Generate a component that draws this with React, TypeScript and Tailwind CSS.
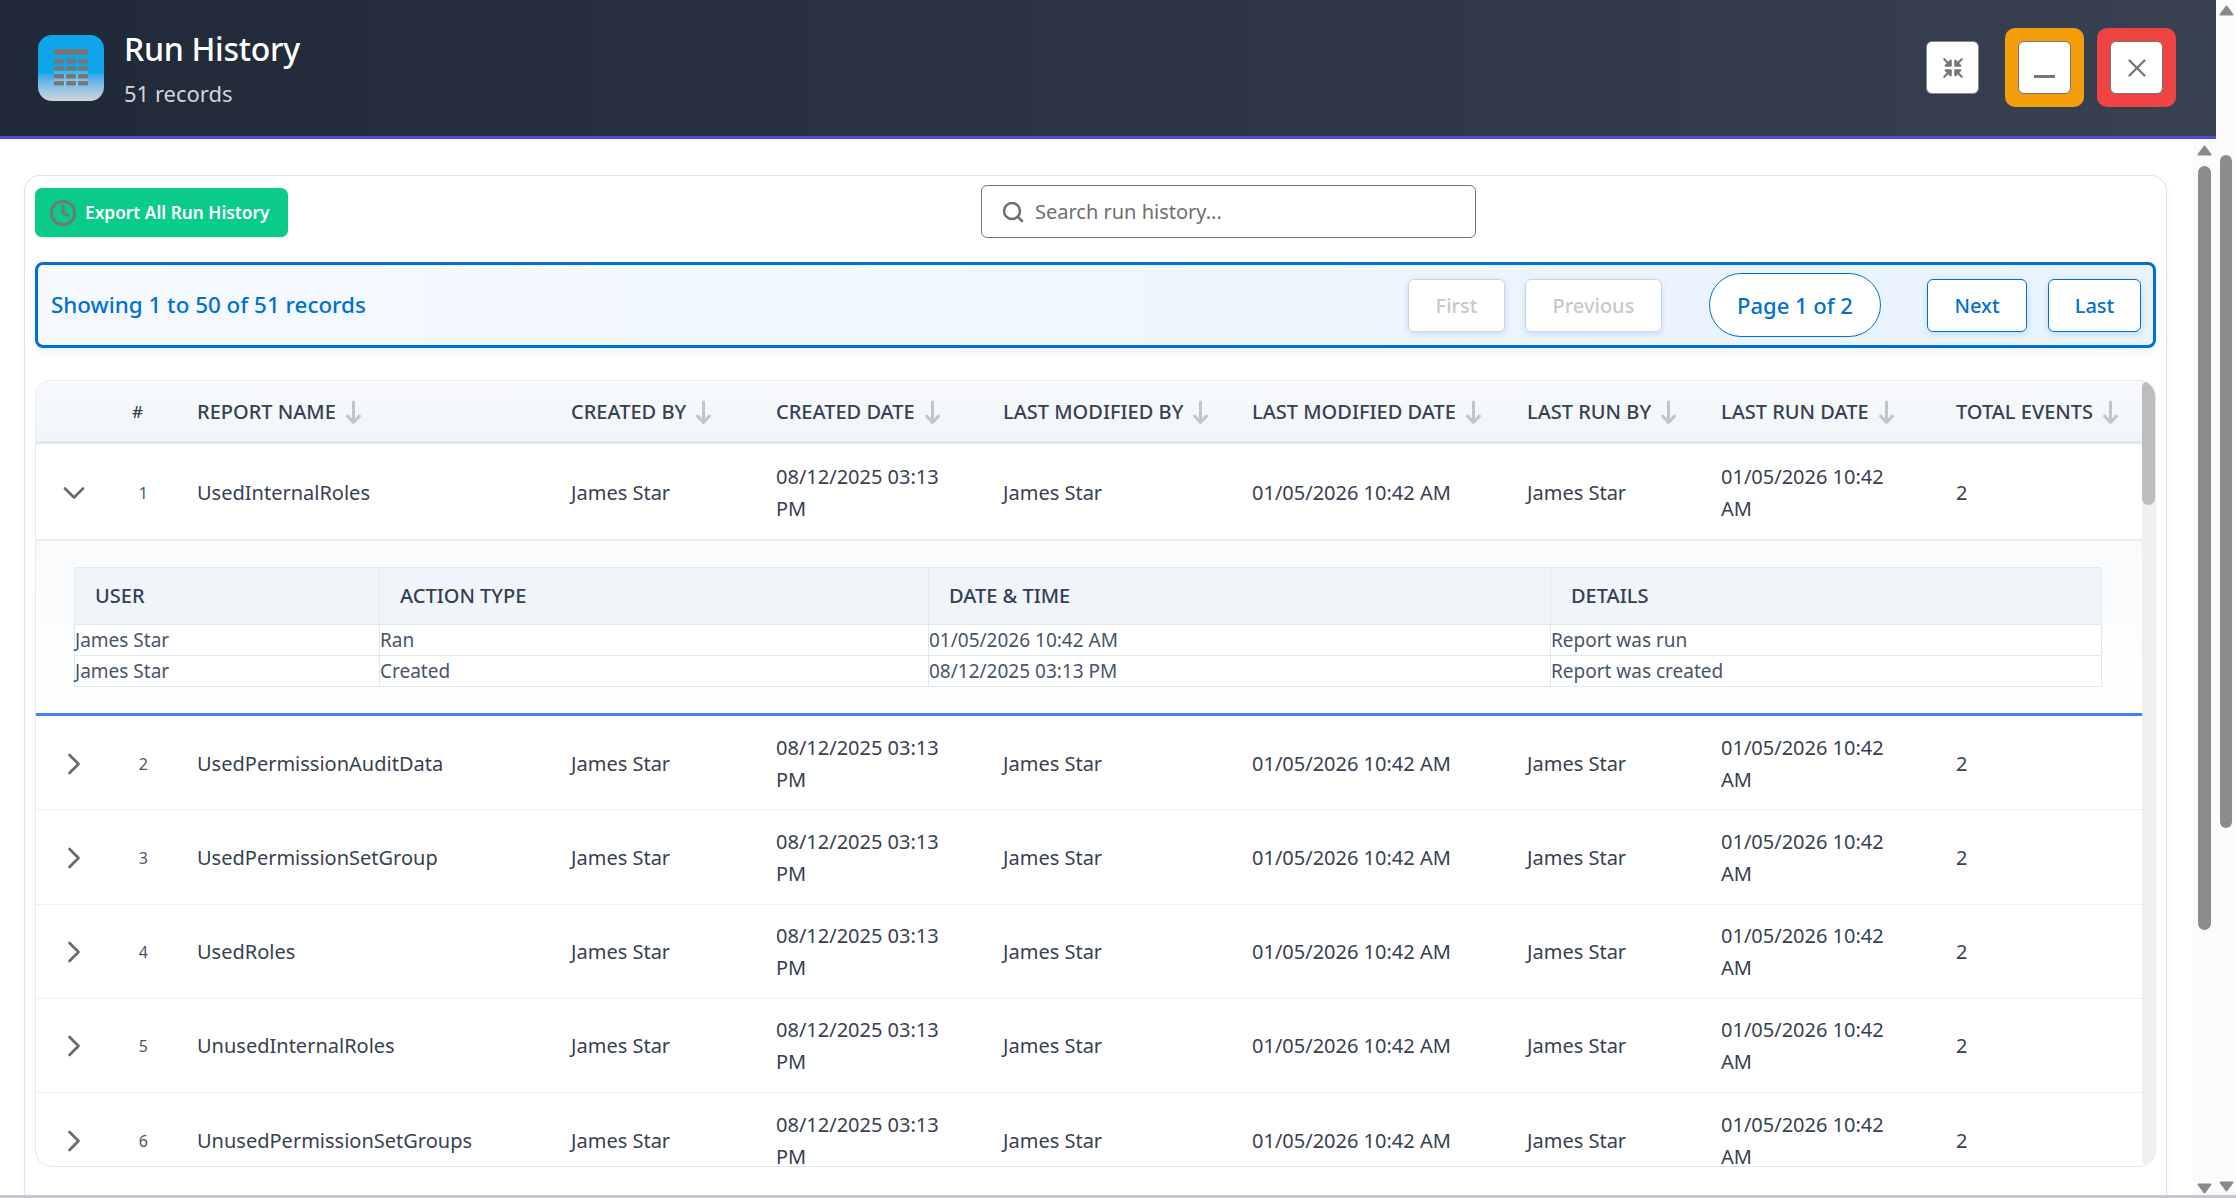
import { ChevronDown, ChevronRight, Clock, Search, X } from "lucide-react";

const columns = [
  { label: "CREATED BY", w: "w-[205px]" },
  { label: "CREATED DATE", w: "w-[227px]" },
  { label: "LAST MODIFIED BY", w: "w-[249px]" },
  { label: "LAST MODIFIED DATE", w: "w-[275px]" },
  { label: "LAST RUN BY", w: "w-[194px]" },
  { label: "LAST RUN DATE", w: "w-[235px]" },
  { label: "TOTAL EVENTS", w: "flex-1" },
];

const reports = [
  "UsedInternalRoles",
  "UsedPermissionAuditData",
  "UsedPermissionSetGroup",
  "UsedRoles",
  "UnusedInternalRoles",
  "UnusedPermissionSetGroups",
];

function SortArrow() {
  return (
    <svg width="17" height="25" viewBox="0 0 17 25" className="ml-[9px] shrink-0" fill="none" stroke="#c4c4c4" strokeWidth="3" strokeLinecap="round" strokeLinejoin="round">
      <path d="M8.5 2v20M2.5 16l6 6.5 6-6.5" />
    </svg>
  );
}

function CompressIcon() {
  return (
    <svg width="22" height="22" viewBox="0 0 24 24" fill="#767676" stroke="#767676" strokeWidth="2.4" strokeLinecap="round" strokeLinejoin="round">
      <path d="M2.5 2.5L7 7M4 9.5h5.5V4zM21.5 2.5L17 7M20 9.5h-5.5V4zM2.5 21.5L7 17M4 14.5h5.5V20zM21.5 21.5L17 17M20 14.5h-5.5V20z" />
    </svg>
  );
}

function Row({ n, name, open }: { n: number; name: string; open?: boolean }) {
  return (
    <div className={`flex items-center pt-[2px] text-[20px] text-[#374151] ${open ? "h-[97px] border-b-2 border-[#e8edf3]" : "h-[94.25px] border-b border-[#eef0f3]"}`}>
      <div className="flex w-[53px] justify-end text-[#6b6b6b]">
        {open ? <ChevronDown size={36} strokeWidth={1.8} className="-mr-[3px]" /> : <ChevronRight size={36} strokeWidth={1.8} className="-mr-[3px]" />}
      </div>
      <div className="w-[59px] text-right text-[16px] text-[#4b5563]">{n}</div>
      <div className="w-[423px] pl-[49px]">{name}</div>
      <div className="w-[205px]">James Star</div>
      <div className="w-[227px] pr-[47px] leading-[32px]">08/12/2025 03:13 PM</div>
      <div className="w-[249px]">James Star</div>
      <div className="w-[275px] whitespace-nowrap">01/05/2026 10:42 AM</div>
      <div className="w-[194px]">James Star</div>
      <div className="w-[235px] pr-[51px] leading-[32px]">01/05/2026 10:42 AM</div>
      <div className="flex-1">2</div>
    </div>
  );
}

function Detail() {
  const head = ["USER", "ACTION TYPE", "DATE & TIME", "DETAILS"];
  const rows = [
    ["James Star", "Ran", "01/05/2026 10:42 AM", "Report was run"],
    ["James Star", "Created", "08/12/2025 03:13 PM", "Report was created"],
  ];
  const widths = ["w-[304px]", "w-[549px]", "w-[622px]", "flex-1"];
  return (
    <div className="border-b-[3px] border-[#3b82f6] bg-gradient-to-b from-[#f8fafc] to-white pb-[26px] pl-[38px] pr-[40px] pt-[26px]">
      <div className="border border-[#e2e8f0]">
        <div className="flex h-[56px] items-center bg-[#f1f5f9] text-[20px] font-medium text-[#334155]">
          {head.map((h, i) => (
            <div key={h} className={`${widths[i]} flex h-full items-center border-l border-[#e2e8f0] pl-[20px] first:border-l-0`}>{h}</div>
          ))}
        </div>
        {rows.map((r) => (
          <div key={r[2]} className="flex h-[31px] items-center border-t border-[#e2e8f0] bg-white text-[19px] text-[#475569]">
            {r.map((c, i) => (
              <div key={c} className={`${widths[i]} flex h-full items-center border-l border-[#e2e8f0] first:border-l-0`}>{c}</div>
            ))}
          </div>
        ))}
      </div>
    </div>
  );
}

function Triangle({ down }: { down?: boolean }) {
  return (
    <svg width="15" height="11" viewBox="0 0 15 11" className="shrink-0">
      <path d={down ? "M1.5 1.5h12L7.5 9.5z" : "M7.5 1.5l6 8h-12z"} fill="#8a8a8a" stroke="#8a8a8a" strokeWidth="2" strokeLinejoin="round" />
    </svg>
  );
}

function PageButton({ label, w, disabled }: { label: string; w: string; disabled?: boolean }) {
  return (
    <button
      className={`flex h-[53px] items-center justify-center rounded-[6px] border bg-white pt-[1px] text-[20px] font-medium shadow-[0_2px_6px_rgba(0,112,210,0.18)] ${w} ${disabled ? "border-[#d1d5db] text-[#c8c8c8]" : "border-[#0070d2] text-[#0070d2]"}`}
    >
      {label}
    </button>
  );
}

export default function App() {
  return (
    <div className="flex h-[1198px] w-[2236px] overflow-hidden bg-white font-['Noto_Sans','Open_Sans',sans-serif]">
      <div className="flex h-full w-[2216px] flex-col border-b-[3px] border-[#c3c7d4]">
        <header className="flex h-[139px] shrink-0 items-center justify-between border-b-[3px] border-[#4f46e5] bg-gradient-to-r from-[#1f2937] to-[#374151] pb-[1px] pl-[38px] pr-[40px]">
          <div className="flex items-center gap-[20px]">
            <div className="flex h-[66px] w-[66px] items-center justify-center rounded-[14px] bg-gradient-to-b from-[#0ea5e9] from-57% to-[#d1d5db]">
              <svg width="34" height="37" viewBox="0 0 34 37">
                <rect x="-3" y="22" width="40" height="15" rx="3" fill="#fff" opacity="0.2" />
                <rect x="0" y="0" width="34" height="6" rx="1" fill="#767676" />
                {[10, 17, 25, 32].map((y) =>
                  [0, 12, 24].map((x) => <rect key={`${x}-${y}`} x={x} y={y} width="10" height="4.5" rx="1" fill="#767676" />),
                )}
              </svg>
            </div>
            <div>
              <div className="text-[32px] font-medium leading-[40px] tracking-[-0.3px] text-white">Run History</div>
              <div className="mt-[10px] text-[22px] leading-[28px] text-[#d1d5db]">51 records</div>
            </div>
          </div>
          <div className="flex items-center gap-[13px]">
            <button className="mr-[13px] flex h-[53px] w-[53px] items-center justify-center rounded-[6px] border border-[#8a8a8a] bg-white">
              <CompressIcon />
            </button>
            <div className="rounded-[10px] bg-[#f59e0b] p-[13px]">
              <button className="flex h-[53px] w-[53px] items-end justify-center rounded-[6px] border border-[#767676] bg-white pb-[15px]">
                <span className="h-[3px] w-[21px] bg-[#767676]" />
              </button>
            </div>
            <div className="rounded-[10px] bg-[#ef4444] p-[13px]">
              <button className="flex h-[53px] w-[53px] items-center justify-center rounded-[6px] border border-[#767676] bg-white text-[#767676]">
                <X size={30} strokeWidth={1.8} />
              </button>
            </div>
          </div>
        </header>

        <div className="flex min-h-0 flex-1">
          <div className="min-h-0 flex-1 overflow-hidden pl-[24px] pr-[26px] pt-[36px]">
            <div className="h-[1100px] rounded-t-[16px] border border-b-0 border-[#dfe1ec] px-[10px] pt-[12px] shadow-[0_2px_8px_rgba(0,0,0,0.04)]">
              <div className="relative flex h-[49px] items-center">
                <button className="flex h-[49px] w-[253px] items-center gap-[8px] whitespace-nowrap rounded-[7px] bg-[#0bcb8b] pl-[14px] text-[17.3px] font-semibold text-white shadow-sm">
                  <Clock size={28} strokeWidth={2.5} className="text-[#767676]" />
                  Export All Run History
                </button>
                <div className="absolute left-[946px] top-[-3px] flex h-[53px] w-[495px] items-center gap-[10px] rounded-[6px] border border-[#767676] bg-white pl-[19px] text-[20px] text-[#6f6f6f]">
                  <Search size={24} strokeWidth={2.5} />
                  Search run history...
                </div>
              </div>

              <div className="mt-[25px] flex h-[86px] items-center justify-between rounded-[8px] border-[3px] border-[#0070d2] bg-gradient-to-r from-[#f6faff] to-[#e8f3fe] pl-[13px] pr-[12px] shadow-[0_4px_12px_rgba(0,112,210,0.08)]">
                <div className="text-[22.4px] font-medium text-[#0070d2]">Showing 1 to 50 of 51 records</div>
                <div className="flex items-center">
                  <PageButton label="First" w="w-[97px]" disabled />
                  <div className="ml-[20px]"><PageButton label="Previous" w="w-[137px]" disabled /></div>
                  <div className="ml-[47px] mr-[46px] flex h-[64px] w-[172px] items-center justify-center rounded-[32px] border border-[#0070d2] bg-white text-[22px] font-medium text-[#0070d2]">
                    Page 1 of 2
                  </div>
                  <PageButton label="Next" w="w-[100px]" />
                  <div className="ml-[21px]"><PageButton label="Last" w="w-[93px]" /></div>
                </div>
              </div>

              <div className="relative mt-[32px] h-[787px] overflow-hidden rounded-[16px] border border-[#e5e9f0]">
                <div className="w-[2106px]">
                  <div className="flex h-[63px] items-center border-b-[3px] border-[#e2e8f0] bg-gradient-to-b from-[#f8fafc] to-[#f1f5f9] pt-[2px] text-[20px] font-medium text-[#374151]">
                    <div className="w-[53px]" />
                    <div className="w-[59px] pr-[5px] text-right text-[17px]">#</div>
                    <div className="flex w-[423px] items-center pl-[49px]">REPORT NAME<SortArrow /></div>
                    {columns.map((c) => (
                      <div key={c.label} className={`flex items-center whitespace-nowrap ${c.w}`}>{c.label}<SortArrow /></div>
                    ))}
                  </div>
                  <Row n={1} name={reports[0]} open />
                  <Detail />
                  {reports.slice(1).map((name, i) => (
                    <Row key={name} n={i + 2} name={name} />
                  ))}
                </div>
                <div className="absolute bottom-0 right-0 top-0 w-[13px] rounded-b-[10px] bg-[#f0f0f0]">
                  <div className="h-[124px] rounded-[7px] bg-[#bdbdbd]" />
                </div>
              </div>
            </div>
          </div>

          <div className="flex w-[23px] shrink-0 flex-col items-center bg-[#fbfbfb] pb-[1px] pt-[6px]">
            <Triangle />
            <div className="mt-[10px] h-[764px] w-[13px] shrink-0 rounded-full bg-[#8c8c8c]" />
            <div className="flex-1" />
            <Triangle down />
          </div>
        </div>
      </div>

      <div className="flex h-full w-[20px] shrink-0 flex-col items-center border-b-[3px] border-[#c3c7d4] bg-[#fbfbfb] pb-[3px] pt-[5px]">
        <Triangle />
        <div className="mt-[139px] h-[673px] w-[12px] shrink-0 rounded-full bg-[#8c8c8c]" />
        <div className="flex-1" />
        <Triangle down />
      </div>
    </div>
  );
}
